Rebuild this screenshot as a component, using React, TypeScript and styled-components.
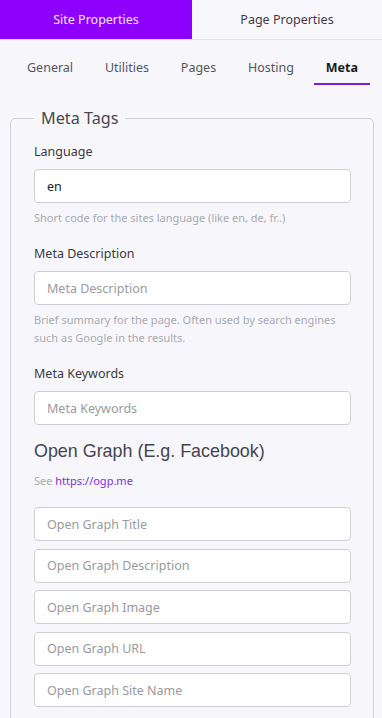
import React from "react";
import styled, { createGlobalStyle } from "styled-components";

const Global = createGlobalStyle`
  html, body { margin: 0; padding: 0; background: #f7f7fb; }
  body { font-family: "Noto Sans", "Open Sans", sans-serif; color: #333; }
  * { box-sizing: border-box; }
`;

const Page = styled.div`
  width: 382px;
  height: 718px;
  background: #f7f7fb;
  overflow: hidden;
`;

const TopTabs = styled.div`
  display: grid;
  grid-template-columns: 192px 1fr;
  height: 40px;
  border-bottom: 1px solid #e3e3ea;
`;

const TopTab = styled.div<{ $active?: boolean }>`
  display: flex;
  align-items: center;
  justify-content: center;
  font-size: 12.5px;
  background: ${(p) => (p.$active ? "#8d00fc" : "#f8f8fc")};
  color: ${(p) => (p.$active ? "#f3e6ff" : "#3c3c44")};
  padding-bottom: 1px;
`;

const SubTabs = styled.div`
  display: flex;
  justify-content: space-between;
  padding: 0 12px 0 15px;
  height: 45px;
`;

const SubTab = styled.div<{ $active?: boolean }>`
  display: flex;
  align-items: center;
  padding: 11px 12px 0;
  font-size: 12.5px;
  font-weight: ${(p) => (p.$active ? 700 : 400)};
  color: ${(p) => (p.$active ? "#1a1a1a" : "#55555c")};
  border-bottom: 2px solid ${(p) => (p.$active ? "#7d1bd6" : "transparent")};
`;

const Content = styled.div`
  padding: 23px 8px 0 10px;
`;

const Fieldset = styled.fieldset`
  margin: 0;
  padding: 15px 22px 40px 23px;
  border: 1px solid #d2d2da;
  border-radius: 5px;
  min-width: 0;
`;

const Legend = styled.legend`
  margin-left: 0;
  padding: 0 7px;
  font-size: 16.2px;
  line-height: 20px;
  color: #48484e;
`;

const Field = styled.div`
  display: flex;
  flex-direction: column;
  margin-bottom: 18px;
`;

const Label = styled.label`
  font-size: 12.5px;
  line-height: 18px;
  color: #3a3a40;
  margin-bottom: 8px;
`;

const Input = styled.input`
  width: 100%;
  height: 34px;
  border: 1px solid #cfcfd6;
  border-radius: 4px;
  background: #fff;
  padding: 0 12px;
  font-family: inherit;
  font-size: 12.5px;
  color: #222;
  outline: none;
  &::placeholder { color: #9a9aa0; }
`;

const Help = styled.div`
  margin-top: 6px;
  font-size: 11px;
  line-height: 18px;
  color: #a9a9b0;
`;

const Heading = styled.h3`
  margin: -4px 0 0;
  font-family: "Liberation Sans", Arial, sans-serif;
  font-weight: 400;
  font-size: 17.9px;
  line-height: 24px;
  color: #45454b;
`;

const See = styled.div`
  margin-top: 9px;
  margin-bottom: 17px;
  font-size: 11px;
  line-height: 18px;
  color: #a9a9b0;
  a { color: #7c2fd4; text-decoration: none; }
`;

const Stack = styled.div`
  display: flex;
  flex-direction: column;
  gap: 7.5px;
`;

export default function App() {
  return (
    <Page>
      <Global />
      <TopTabs>
        <TopTab $active>Site Properties</TopTab>
        <TopTab>Page Properties</TopTab>
      </TopTabs>
      <SubTabs>
        <SubTab>General</SubTab>
        <SubTab>Utilities</SubTab>
        <SubTab>Pages</SubTab>
        <SubTab>Hosting</SubTab>
        <SubTab $active>Meta</SubTab>
      </SubTabs>
      <Content>
        <Fieldset>
          <Legend>Meta Tags</Legend>
          <Field>
            <Label>Language</Label>
            <Input defaultValue="en" />
            <Help>Short code for the sites language (like en, de, fr..)</Help>
          </Field>
          <Field>
            <Label>Meta Description</Label>
            <Input placeholder="Meta Description" />
            <Help>Brief summary for the page. Often used by search engines such as Google in the results.</Help>
          </Field>
          <Field>
            <Label>Meta Keywords</Label>
            <Input placeholder="Meta Keywords" />
          </Field>
          <Heading>Open Graph (E.g. Facebook)</Heading>
          <See>
            See <a href="#">https://ogp.me</a>
          </See>
          <Stack>
            <Input placeholder="Open Graph Title" />
            <Input placeholder="Open Graph Description" />
            <Input placeholder="Open Graph Image" />
            <Input placeholder="Open Graph URL" />
            <Input placeholder="Open Graph Site Name" />
          </Stack>
        </Fieldset>
      </Content>
    </Page>
  );
}
